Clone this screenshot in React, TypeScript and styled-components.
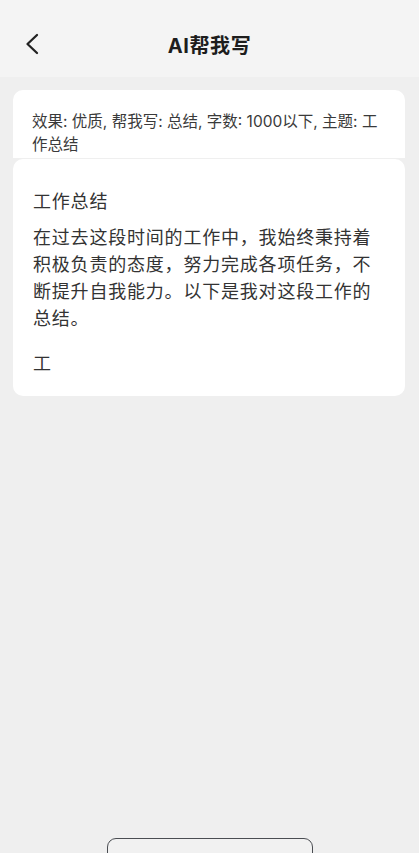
import React from "react";
import styled, { createGlobalStyle } from "styled-components";

const GlobalStyle = createGlobalStyle`
  html, body {
    margin: 0;
    padding: 0;
    background: #efefef;
    font-family: "Noto Sans CJK SC", "Noto Sans", sans-serif;
  }
`;

// page shell
const Page = styled.div`
  height: 100vh;
  display: flex;
  flex-direction: column;
  overflow: hidden;
  background: #efefef;
`;

const Header = styled.header`
  height: 77px;
  padding-top: 11px;
  box-sizing: border-box;
  flex-shrink: 0;
  background: #f4f4f4;
  display: grid;
  grid-template-columns: 1fr auto 1fr;
  align-items: center;
`;

const BackButton = styled.button`
  justify-self: start;
  margin-left: 20px;
  width: 24px;
  height: 28px;
  padding: 0;
  border: none;
  background: none;
  display: flex;
  align-items: center;
  justify-content: center;
`;

const Title = styled.h1`
  margin: 0;
  font-family: Inter, "Noto Sans CJK SC", sans-serif;
  font-size: 20px;
  font-weight: 700;
  color: #1d1d1d;
  letter-spacing: 0.6px;
`;

const Content = styled.main`
  flex: 1;
  padding: 13px 14px 0 13px;
  display: flex;
  flex-direction: column;
  gap: 1px;
`;

const Card = styled.section<{ $flatBottom?: boolean }>`
  background: #ffffff;
  border-radius: ${(p) => (p.$flatBottom ? "10px 10px 0 0" : "10px")};
`;

const PromptCard = styled(Card)`
  height: 68px;
  padding: 20px 19px 0 19px;
  box-sizing: border-box;
  overflow: hidden;
  font-family: Inter, "Noto Sans CJK SC", sans-serif;
  font-size: 15.5px;
  line-height: 23px;
  color: #3a3a3a;
`;

const ResultCard = styled(Card)`
  padding: 28px 20px 20px 20px;
  color: #333333;
  font-size: 18px;
  letter-spacing: 0.8px;
  line-height: 27px;
`;

const Paragraph = styled.p<{ $gap?: number }>`
  margin: ${(p) => p.$gap ?? 0}px 0 0 0;
`;

const Footer = styled.footer`
  height: 15px;
  flex-shrink: 0;
  overflow: hidden;
  display: flex;
  justify-content: center;
  align-items: flex-start;
`;

const StopButton = styled.button`
  width: 206px;
  height: 44px;
  box-sizing: border-box;
  border: 1.5px solid #4a4d52;
  border-radius: 9px;
  background: #f1f1f1;
  display: flex;
  align-items: center;
  justify-content: center;
  gap: 6px;
  font-family: inherit;
  font-size: 15px;
  color: #333;
`;

const Dot = styled.span`
  width: 14px;
  height: 14px;
  border-radius: 50%;
  border: 2px solid #444;
  box-sizing: border-box;
`;

function App() {
  return (
    <Page>
      <GlobalStyle />
      <Header>
        <BackButton aria-label="返回">
          <svg width="16" height="22" viewBox="0 0 16 22" fill="none">
            <path
              d="M13 2 L3.5 11 L13 20"
              stroke="#222"
              strokeWidth="2.3"
              strokeLinecap="round"
              strokeLinejoin="round"
            />
          </svg>
        </BackButton>
        <Title>AI帮我写</Title>
        <span />
      </Header>
      <Content>
        <PromptCard $flatBottom>
          效果: 优质, 帮我写: 总结, 字数: 1000以下, 主题: 工作总结
        </PromptCard>
        <ResultCard>
          <Paragraph>工作总结</Paragraph>
          <Paragraph $gap={9}>
            在过去这段时间的工作中，我始终秉持着积极负责的态度，努力完成各项任务，不断提升自我能力。以下是我对这段工作的总结。
          </Paragraph>
          <Paragraph $gap={18}>工</Paragraph>
        </ResultCard>
      </Content>
      <Footer>
        <StopButton>
          <Dot />
          停止生成
        </StopButton>
      </Footer>
    </Page>
  );
}

export default App;
